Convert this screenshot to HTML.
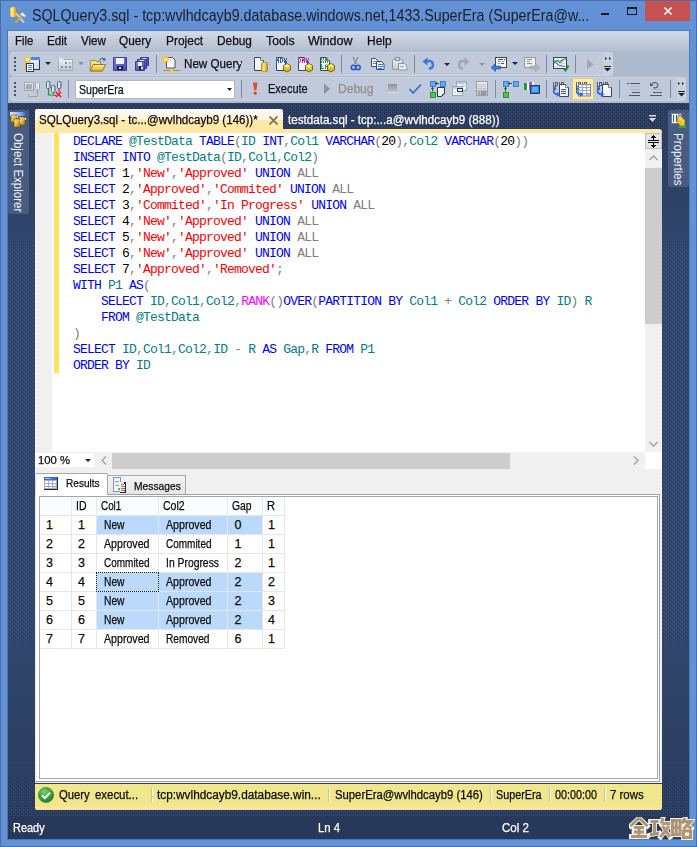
<!DOCTYPE html>
<html><head><meta charset="utf-8"><style>
*{margin:0;padding:0;box-sizing:border-box}
html,body{width:697px;height:847px;overflow:hidden;background:#6592d5}
body{position:relative;font-family:"Liberation Sans",sans-serif;font-size:11px;color:#1e1e1e}
.a{position:absolute;display:block}
.t{position:absolute;white-space:nowrap;line-height:1;transform-origin:0 0;-webkit-text-stroke:0.25px currentColor}
.dots{background-color:#30446a;
 background-image:radial-gradient(circle at 1.5px 1.5px,#243556 0.8px,transparent 1.2px),radial-gradient(circle at 1.5px 1.5px,#243556 0.8px,transparent 1.2px);
 background-size:4px 4px,4px 4px;background-position:0 0,2px 2px}
.code{position:absolute;left:73px;font-family:"Liberation Mono",monospace;font-size:13px;letter-spacing:-0.8px;line-height:16px;white-space:pre;color:#000}
.k{color:#0000ff}.i{color:#008080}.s{color:#ff0000}.g{color:#808080}.m{color:#ff00ff}
</style></head><body>
<div class="a" style="left:0px;top:0px;width:697px;height:847px;background:#6291d6;border:1px solid #4b6da8"></div>
<div class="a" style="left:7px;top:30px;width:683px;height:810px;background:transparent;border:1px solid #4a78b8"></div>
<svg class="a" style="left:6px;top:3px;" width="24" height="24" viewBox="0 0 24 24">
<defs><linearGradient id="cyl" x1="0" x2="1"><stop offset="0" stop-color="#e8b830"/><stop offset="0.35" stop-color="#fff0a0"/><stop offset="0.7" stop-color="#f0b820"/><stop offset="1" stop-color="#c08010"/></linearGradient></defs>
<path d="M12.5 5.3h6.5v4.5M5.5 15.5v4.3h2.5" fill="none" stroke="#40d040" stroke-width="0.9" stroke-dasharray="0.9 1.1"/>
<path d="M4 5.5a3.3 1.5 0 0 1 6.6 0v7a3.3 1.5 0 0 1 -6.6 0z" fill="url(#cyl)"/>
<path d="M10.5 11l7.5 8.5" stroke="#f0f2f6" stroke-width="1.6"/>
<path d="M10.5 11l7.5 8.5" stroke="#9aa0a8" stroke-width="0.5"/>
<circle cx="10.3" cy="11" r="1.4" fill="#f8c020"/>
<path d="M9.5 19.5l6-6" stroke="#e8a818" stroke-width="1.8"/>
<path d="M13.5 11.5l3-2.2 3.5 3.5-1.5 1.5z" fill="#f4f4f6" stroke="#8a9098" stroke-width="0.5"/>
</svg>
<div class="t" style="left:31.50px;top:7.79px;font-size:15.6px;color:#20202c;transform:scaleX(0.9142);-webkit-text-stroke:0">SQLQuery3.sql - tcp:wvlhdcayb9.database.windows.net,1433.SuperEra (SuperEra@w...</div>
<div class="a" style="left:601px;top:13px;width:8px;height:2px;background:#1a1a1a;"></div>
<div class="a" style="left:627px;top:7px;width:10px;height:8px;border:1px solid #1a1a1a;border-top-width:2px"></div>
<div class="a" style="left:645px;top:1px;width:45px;height:20px;background:#c75050;"></div>
<svg class="a" style="left:663px;top:6px;" width="10" height="10" viewBox="0 0 10 10"><path d="M1.5 1.5L8.5 8.5M8.5 1.5L1.5 8.5" stroke="#fff" stroke-width="1.6"/></svg>
<div class="a" style="left:8px;top:30px;width:681px;height:1px;background:#4d79b9;"></div>
<div class="a" style="left:8px;top:31px;width:681px;height:20px;background:linear-gradient(#d5dbe6,#c6cedc 40%,#b3bfd1);"></div>
<div class="a" style="left:8px;top:51px;width:681px;height:52px;background:#aebbcf;"></div>
<div class="t" style="left:14.60px;top:35.27px;font-size:12.2px;color:#10101c;transform:scaleX(0.9360);">File</div>
<div class="t" style="left:46.70px;top:35.27px;font-size:12.2px;color:#10101c;transform:scaleX(0.9561);">Edit</div>
<div class="t" style="left:80.60px;top:35.27px;font-size:12.2px;color:#10101c;transform:scaleX(0.9533);">View</div>
<div class="t" style="left:119.30px;top:35.27px;font-size:12.2px;color:#10101c;transform:scaleX(0.9693);">Query</div>
<div class="t" style="left:165.80px;top:35.27px;font-size:12.2px;color:#10101c;transform:scaleX(0.9798);">Project</div>
<div class="t" style="left:216.60px;top:35.27px;font-size:12.2px;color:#10101c;transform:scaleX(0.9736);">Debug</div>
<div class="t" style="left:266.00px;top:35.27px;font-size:12.2px;color:#10101c;transform:scaleX(1.0077);">Tools</div>
<div class="t" style="left:308.40px;top:35.27px;font-size:12.2px;color:#10101c;transform:scaleX(1.0279);">Window</div>
<div class="t" style="left:366.70px;top:35.27px;font-size:12.2px;color:#10101c;transform:scaleX(0.9844);">Help</div>
<div class="a" style="left:10px;top:52px;width:603px;height:24px;background:#c1cada;border-radius:3px;border:1px solid #ccd4e1"></div>
<div class="a" style="left:603px;top:53px;width:9px;height:22px;background:#c9d1df;border-radius:0 3px 3px 0"></div>
<div class="a" style="left:10px;top:77px;width:676px;height:24px;background:#c1cada;border-radius:3px;border:1px solid #ccd4e1"></div>
<div class="a" style="left:677px;top:78px;width:8px;height:22px;background:#c9d1df;border-radius:0 3px 3px 0"></div>
<div class="a" style="left:14px;top:57px;width:2px;height:2px;background:#445270;"></div>
<div class="a" style="left:14px;top:61px;width:2px;height:2px;background:#445270;"></div>
<div class="a" style="left:14px;top:65px;width:2px;height:2px;background:#445270;"></div>
<div class="a" style="left:14px;top:69px;width:2px;height:2px;background:#445270;"></div>
<div class="a" style="left:14px;top:82px;width:2px;height:2px;background:#445270;"></div>
<div class="a" style="left:14px;top:86px;width:2px;height:2px;background:#445270;"></div>
<div class="a" style="left:14px;top:90px;width:2px;height:2px;background:#445270;"></div>
<div class="a" style="left:14px;top:94px;width:2px;height:2px;background:#445270;"></div>
<div class="a" style="left:75px;top:80px;width:160px;height:19px;background:#fff;border:1px solid #aeb7c6"></div>
<div class="t" style="left:78.50px;top:84.02px;font-size:12.5px;color:#10101c;transform:scaleX(0.8465);">SuperEra</div>
<div class="t" style="left:268.30px;top:83.02px;font-size:12.5px;color:#10101c;transform:scaleX(0.8790);">Execute</div>
<div class="t" style="left:337.50px;top:83.02px;font-size:12.5px;color:#978b86;transform:scaleX(0.9638);">Debug</div>
<div class="t" style="left:183.50px;top:58.02px;font-size:12.5px;color:#10101c;transform:scaleX(0.9293);">New Query</div>
<svg class="a" style="left:0;top:0" width="697" height="102"><defs>
<linearGradient id="winbody" x1="0" y1="0" x2="1" y2="1"><stop offset="0" stop-color="#ffffff"/><stop offset="1" stop-color="#c8d4f0"/></linearGradient>
<linearGradient id="grayg" x1="0" y1="0" x2="0" y2="1"><stop offset="0" stop-color="#eceef2"/><stop offset="1" stop-color="#c4c8ce"/></linearGradient>
<linearGradient id="fold" x1="0" y1="0" x2="0" y2="1"><stop offset="0" stop-color="#fff0a0"/><stop offset="1" stop-color="#e8a820"/></linearGradient>
<linearGradient id="flop" x1="0" y1="0" x2="1" y2="1"><stop offset="0" stop-color="#7a80e0"/><stop offset="1" stop-color="#4a4ab0"/></linearGradient>
<linearGradient id="docg" x1="0" y1="0" x2="1" y2="1"><stop offset="0" stop-color="#ffffff"/><stop offset="1" stop-color="#e4eaf4"/></linearGradient>
<linearGradient id="hexg" x1="0" y1="0" x2="0" y2="1"><stop offset="0" stop-color="#fff060"/><stop offset="1" stop-color="#d0a800"/></linearGradient>
<linearGradient id="cylg" x1="0" y1="0" x2="1" y2="0"><stop offset="0" stop-color="#e0a820"/><stop offset="0.4" stop-color="#ffe890"/><stop offset="1" stop-color="#c88a10"/></linearGradient>
<linearGradient id="playg" x1="0" y1="0" x2="1" y2="0"><stop offset="0" stop-color="#c4c8ce"/><stop offset="1" stop-color="#8c9098"/></linearGradient>
<linearGradient id="stopg" x1="0" y1="0" x2="0" y2="1"><stop offset="0" stop-color="#8e9298"/><stop offset="1" stop-color="#c0c4ca"/></linearGradient>
<linearGradient id="srvg" x1="0" y1="0" x2="1" y2="0"><stop offset="0" stop-color="#ffffff"/><stop offset="1" stop-color="#a8c0e8"/></linearGradient>
</defs><g transform="translate(22,54)">
<rect x="9" y="3" width="9" height="13" fill="#2c3a58"/>
<rect x="9" y="3" width="8" height="12" fill="url(#winbody)"/>
<rect x="9" y="3" width="9" height="3" fill="#4e86e8"/>
<rect x="3" y="9" width="1" height="7" fill="#f0b010"/>
<path d="M5.5 2v7M2 5.5h7M3 3l5 5M8 3l-5 5" stroke="#f6cc20" stroke-width="1.4"/>
<circle cx="5.5" cy="5.5" r="1.5" fill="#fffbe0"/>
<rect x="4" y="9" width="8" height="9" fill="#2c3a58"/>
<rect x="5" y="10" width="6" height="7" fill="#f6f8fc"/>
<rect x="6" y="11" width="4" height="1" fill="#4a80e0"/><rect x="6" y="13" width="4" height="1" fill="#4a80e0"/><rect x="6" y="15" width="4" height="1" fill="#4a80e0"/>
</g><path d="M45 62h6l-3 3z" fill="#1c2434"/><g transform="translate(58,58)">
<rect x="0" y="1" width="15" height="12" fill="#a8adb6"/>
<rect x="1" y="2" width="13" height="10" fill="url(#grayg)"/>
<rect x="7" y="4" width="2" height="2" fill="#8a9098"/><rect x="11" y="4" width="2" height="2" fill="#b8bcc2"/>
<rect x="3" y="8" width="2" height="2" fill="#8a9098"/><rect x="7" y="8" width="2" height="2" fill="#8a9098"/><rect x="11" y="8" width="2" height="2" fill="#8a9098"/>
<path d="M3 -1v5M0.5 1.5h5M1 -0.5l4 4M5 -0.5l-4 4" stroke="#e8eaee" stroke-width="1"/>
</g><path d="M78 62h6l-3 3z" fill="#8a919e"/><g transform="translate(90,57)">
<path d="M0.5 3.5h5l1 1h4v9.5h-10.5z" fill="#f6dc88" stroke="#a88a40"/>
<path d="M3 7.5h12.5l-3 6.5h-12z" fill="url(#fold)" stroke="#a07820"/>
<path d="M9.5 3.5c1-2.5 4-3 5.5-1" fill="none" stroke="#4a7ac8" stroke-width="1.2"/>
<path d="M14 0.5l2 3h-3.5z" fill="#2a5ab0"/>
</g><g transform="translate(113,57)">
<rect x="0" y="0" width="14" height="14" rx="1" fill="#3c3c98"/>
<rect x="1" y="1" width="12" height="12" fill="url(#flop)"/>
<rect x="3" y="1" width="8" height="6" fill="#f0f2fa"/>
<rect x="4" y="9" width="6" height="4" fill="#202048"/>
<rect x="6" y="10" width="2" height="2" fill="#d8dcf0"/>
</g><g transform="translate(140,57)">
<rect x="0" y="0" width="9" height="9" rx="1" fill="#3c3c98"/>
<rect x="1" y="1" width="7" height="7" fill="url(#flop)"/>
<rect x="3" y="1" width="3" height="3" fill="#f0f2fa"/>
<rect x="4" y="4" width="1" height="4" fill="#202048"/>
<rect x="99" y="5" width="2" height="2" fill="#d8dcf0"/>
</g><g transform="translate(137,59)">
<rect x="0" y="0" width="10" height="10" rx="1" fill="#3c3c98"/>
<rect x="1" y="1" width="8" height="8" fill="url(#flop)"/>
<rect x="3" y="1" width="4" height="4" fill="#f0f2fa"/>
<rect x="4" y="5" width="2" height="4" fill="#202048"/>
<rect x="99" y="6" width="2" height="2" fill="#d8dcf0"/>
</g><g transform="translate(135,61)">
<rect x="0" y="0" width="10" height="10" rx="1" fill="#3c3c98"/>
<rect x="1" y="1" width="8" height="8" fill="url(#flop)"/>
<rect x="3" y="1" width="4" height="4" fill="#f0f2fa"/>
<rect x="4" y="5" width="2" height="4" fill="#202048"/>
<rect x="6" y="6" width="2" height="2" fill="#d8dcf0"/>
</g><rect x="156" y="55" width="1" height="18" fill="#7e8a9e"/><g transform="translate(162,56)">
<path d="M4.5 1.5h6l2.5 2.5v8h-8.5z" fill="#f8fafc" stroke="#4a5068"/>
<path d="M3.5 0v7M0 3.5h7M1 1l5 5M6 1l-5 5" stroke="#f8b820" stroke-width="1.5"/>
<circle cx="3.5" cy="3.5" r="2" fill="#ffe860"/>
<rect x="9" y="12" width="1" height="2" fill="#7a8090"/>
<rect x="1" y="14" width="17" height="1" fill="#c88a10"/>
<rect x="8" y="13" width="3" height="3" fill="#f8d020"/>
</g><path d="M254.5 57.5h6l3 3v10h-9z" fill="url(#docg)" stroke="#3c4662"/><path d="M260.5 57.5v3h3" fill="#fff" stroke="#3c4662" stroke-width="0.7"/><path d="M261.5 63.5a3 1.2 0 0 1 6 0v7a3 1.2 0 0 1 -6 0z" fill="url(#cylg)" stroke="#b07810" stroke-width="0.7"/><path d="M276.5 57.5h6l3 3v10h-9z" fill="url(#docg)" stroke="#3c4662"/><path d="M282.5 57.5v3h3" fill="#fff" stroke="#3c4662" stroke-width="0.7"/><g shape-rendering="crispEdges"><rect x="276" y="58" width="1" height="1" fill="#2a62c0"/><rect x="278" y="58" width="1" height="1" fill="#2a62c0"/><rect x="276" y="59" width="1" height="1" fill="#2a62c0"/><rect x="277" y="59" width="1" height="1" fill="#2a62c0"/><rect x="278" y="59" width="1" height="1" fill="#2a62c0"/><rect x="276" y="60" width="1" height="1" fill="#2a62c0"/><rect x="277" y="60" width="1" height="1" fill="#2a62c0"/><rect x="278" y="60" width="1" height="1" fill="#2a62c0"/><rect x="276" y="61" width="1" height="1" fill="#2a62c0"/><rect x="278" y="61" width="1" height="1" fill="#2a62c0"/><rect x="276" y="62" width="1" height="1" fill="#2a62c0"/><rect x="278" y="62" width="1" height="1" fill="#2a62c0"/><rect x="280" y="58" width="1" height="1" fill="#2a62c0"/><rect x="281" y="58" width="1" height="1" fill="#2a62c0"/><rect x="280" y="59" width="1" height="1" fill="#2a62c0"/><rect x="282" y="59" width="1" height="1" fill="#2a62c0"/><rect x="280" y="60" width="1" height="1" fill="#2a62c0"/><rect x="282" y="60" width="1" height="1" fill="#2a62c0"/><rect x="280" y="61" width="1" height="1" fill="#2a62c0"/><rect x="282" y="61" width="1" height="1" fill="#2a62c0"/><rect x="280" y="62" width="1" height="1" fill="#2a62c0"/><rect x="281" y="62" width="1" height="1" fill="#2a62c0"/><rect x="284" y="58" width="1" height="1" fill="#2a62c0"/><rect x="286" y="58" width="1" height="1" fill="#2a62c0"/><rect x="284" y="59" width="1" height="1" fill="#2a62c0"/><rect x="286" y="59" width="1" height="1" fill="#2a62c0"/><rect x="285" y="60" width="1" height="1" fill="#2a62c0"/><rect x="284" y="61" width="1" height="1" fill="#2a62c0"/><rect x="286" y="61" width="1" height="1" fill="#2a62c0"/><rect x="284" y="62" width="1" height="1" fill="#2a62c0"/><rect x="286" y="62" width="1" height="1" fill="#2a62c0"/></g><path d="M283.5 65.5L287 63.5L290.5 65.5v4.5L287 72L283.5 70z" fill="url(#hexg)" stroke="#706010" stroke-width="0.9"/><path d="M284.5 65.8L287 64.5L289.5 65.8L287 67z" fill="#fffac0"/><path d="M298.5 57.5h6l3 3v10h-9z" fill="url(#docg)" stroke="#3c4662"/><path d="M304.5 57.5v3h3" fill="#fff" stroke="#3c4662" stroke-width="0.7"/><g shape-rendering="crispEdges"><rect x="298" y="58" width="1" height="1" fill="#c028b8"/><rect x="299" y="58" width="1" height="1" fill="#c028b8"/><rect x="298" y="59" width="1" height="1" fill="#c028b8"/><rect x="300" y="59" width="1" height="1" fill="#c028b8"/><rect x="298" y="60" width="1" height="1" fill="#c028b8"/><rect x="300" y="60" width="1" height="1" fill="#c028b8"/><rect x="298" y="61" width="1" height="1" fill="#c028b8"/><rect x="300" y="61" width="1" height="1" fill="#c028b8"/><rect x="298" y="62" width="1" height="1" fill="#c028b8"/><rect x="299" y="62" width="1" height="1" fill="#c028b8"/><rect x="302" y="58" width="1" height="1" fill="#c028b8"/><rect x="304" y="58" width="1" height="1" fill="#c028b8"/><rect x="302" y="59" width="1" height="1" fill="#c028b8"/><rect x="303" y="59" width="1" height="1" fill="#c028b8"/><rect x="304" y="59" width="1" height="1" fill="#c028b8"/><rect x="302" y="60" width="1" height="1" fill="#c028b8"/><rect x="303" y="60" width="1" height="1" fill="#c028b8"/><rect x="304" y="60" width="1" height="1" fill="#c028b8"/><rect x="302" y="61" width="1" height="1" fill="#c028b8"/><rect x="304" y="61" width="1" height="1" fill="#c028b8"/><rect x="302" y="62" width="1" height="1" fill="#c028b8"/><rect x="304" y="62" width="1" height="1" fill="#c028b8"/><rect x="306" y="58" width="1" height="1" fill="#c028b8"/><rect x="308" y="58" width="1" height="1" fill="#c028b8"/><rect x="306" y="59" width="1" height="1" fill="#c028b8"/><rect x="308" y="59" width="1" height="1" fill="#c028b8"/><rect x="307" y="60" width="1" height="1" fill="#c028b8"/><rect x="306" y="61" width="1" height="1" fill="#c028b8"/><rect x="308" y="61" width="1" height="1" fill="#c028b8"/><rect x="306" y="62" width="1" height="1" fill="#c028b8"/><rect x="308" y="62" width="1" height="1" fill="#c028b8"/></g><path d="M305.5 65.5L309 63.5L312.5 65.5v4.5L309 72L305.5 70z" fill="url(#hexg)" stroke="#706010" stroke-width="0.9"/><path d="M306.5 65.8L309 64.5L311.5 65.8L309 67z" fill="#fffac0"/><path d="M320.5 57.5h6l3 3v10h-9z" fill="url(#docg)" stroke="#3c4662"/><path d="M326.5 57.5v3h3" fill="#fff" stroke="#3c4662" stroke-width="0.7"/><g shape-rendering="crispEdges"><rect x="321" y="58" width="1" height="1" fill="#30a050"/><rect x="323" y="58" width="1" height="1" fill="#30a050"/><rect x="321" y="59" width="1" height="1" fill="#30a050"/><rect x="323" y="59" width="1" height="1" fill="#30a050"/><rect x="322" y="60" width="1" height="1" fill="#30a050"/><rect x="321" y="61" width="1" height="1" fill="#30a050"/><rect x="323" y="61" width="1" height="1" fill="#30a050"/><rect x="321" y="62" width="1" height="1" fill="#30a050"/><rect x="323" y="62" width="1" height="1" fill="#30a050"/><rect x="325" y="58" width="1" height="1" fill="#30a050"/><rect x="327" y="58" width="1" height="1" fill="#30a050"/><rect x="325" y="59" width="1" height="1" fill="#30a050"/><rect x="326" y="59" width="1" height="1" fill="#30a050"/><rect x="327" y="59" width="1" height="1" fill="#30a050"/><rect x="325" y="60" width="1" height="1" fill="#30a050"/><rect x="326" y="60" width="1" height="1" fill="#30a050"/><rect x="327" y="60" width="1" height="1" fill="#30a050"/><rect x="325" y="61" width="1" height="1" fill="#30a050"/><rect x="327" y="61" width="1" height="1" fill="#30a050"/><rect x="325" y="62" width="1" height="1" fill="#30a050"/><rect x="327" y="62" width="1" height="1" fill="#30a050"/></g><g shape-rendering="crispEdges"><rect x="321" y="64" width="1" height="1" fill="#30a050"/><rect x="321" y="65" width="1" height="1" fill="#30a050"/><rect x="321" y="66" width="1" height="1" fill="#30a050"/><rect x="321" y="67" width="1" height="1" fill="#30a050"/><rect x="321" y="68" width="1" height="1" fill="#30a050"/><rect x="322" y="68" width="1" height="1" fill="#30a050"/><rect x="323" y="68" width="1" height="1" fill="#30a050"/><rect x="326" y="64" width="1" height="1" fill="#30a050"/><rect x="325" y="65" width="1" height="1" fill="#30a050"/><rect x="327" y="65" width="1" height="1" fill="#30a050"/><rect x="325" y="66" width="1" height="1" fill="#30a050"/><rect x="326" y="66" width="1" height="1" fill="#30a050"/><rect x="327" y="66" width="1" height="1" fill="#30a050"/><rect x="325" y="67" width="1" height="1" fill="#30a050"/><rect x="327" y="67" width="1" height="1" fill="#30a050"/><rect x="325" y="68" width="1" height="1" fill="#30a050"/><rect x="327" y="68" width="1" height="1" fill="#30a050"/></g><path d="M327.5 65.5L331 63.5L334.5 65.5v4.5L331 72L327.5 70z" fill="url(#hexg)" stroke="#706010" stroke-width="0.9"/><path d="M328.5 65.8L331 64.5L333.5 65.8L331 67z" fill="#fffac0"/><rect x="341" y="55" width="1" height="18" fill="#7e8a9e"/><path d="M353 57l3.5 7M358 57l-3.5 7" stroke="#8a8e96" stroke-width="1.4"/>
<circle cx="353.5" cy="67.5" r="2.2" fill="none" stroke="#2a58c8" stroke-width="1.6"/>
<circle cx="358" cy="67.5" r="2.2" fill="none" stroke="#2a58c8" stroke-width="1.6"/><path d="M371.5 58.5h4l2 2v6h-6z" fill="#fafcff" stroke="#3a5080"/>
<rect x="373" y="61" width="3" height="1" fill="#4a80e0"/><rect x="373" y="63" width="3" height="1" fill="#4a80e0"/>
<path d="M376.5 61.5h5l2.5 2.5v5.5h-7.5z" fill="#fafcff" stroke="#2a4a90"/>
<rect x="378" y="64" width="5" height="1" fill="#3a70d8"/><rect x="378" y="66" width="5" height="1" fill="#3a70d8"/><rect x="378" y="68" width="4" height="1" fill="#3a70d8"/><rect x="392.5" y="59.5" width="10" height="10" rx="1" fill="url(#grayg)" stroke="#8e9298"/>
<rect x="395.5" y="57.5" width="4" height="3" fill="#d0d2d6" stroke="#8e9298"/>
<path d="M398.5 63.5h6l2.5 2.5v4h-8.5z" fill="#e8eaee" stroke="#8e9298"/>
<rect x="400" y="66" width="4" height="1" fill="#a0a4aa"/><rect x="414" y="55" width="1" height="18" fill="#7e8a9e"/><path d="M426 61h3.5a3.8 3.8 0 0 1 0.5 7.5l-0.8 0.8" fill="none" stroke="#3a7ae0" stroke-width="2.4"/><path d="M422.5 61.5l5-4.2v8.4z" fill="#3a7ae0"/><path d="M444 63h6l-3 3z" fill="#1c2434"/><path d="M466 61h-3.5a3.8 3.8 0 0 0 -0.5 7.5l0.8 0.8" fill="none" stroke="#a4a8ae" stroke-width="2.4"/><path d="M469.5 61.5l-5-4.2v8.4z" fill="#a4a8ae"/><path d="M479 63h6l-3 3z" fill="#8a919e"/><rect x="495.5" y="57.5" width="11" height="10" fill="#fcfcfc" stroke="#4a4430"/>
<rect x="498" y="59" width="5" height="1" fill="#1a50e8"/><rect x="504" y="59" width="1" height="1" fill="#1a50e8"/>
<rect x="498" y="61" width="3" height="1" fill="#909090"/><rect x="502" y="61" width="2" height="1" fill="#909090"/>
<rect x="498" y="63" width="2" height="1" fill="#909090"/><rect x="501" y="63" width="3" height="1" fill="#1a50e8"/>
<path d="M491 67.5l4.5-4v2.5h5v3h-5v2.5z" fill="#3a7ae0" stroke="#1a4aa8" stroke-width="0.6"/><path d="M512 62h6l-3 3z" fill="#1c2434"/><rect x="524.5" y="57.5" width="11" height="10" fill="#eeeeee" stroke="#9a9a9a"/>
<rect x="527" y="59" width="5" height="1" fill="#909090"/><rect x="527" y="61" width="3" height="1" fill="#b0b0b0"/><rect x="527" y="63" width="5" height="1" fill="#909090"/>
<path d="M540 67.5l-4.5-4v2.5h-5v3h5v2.5z" fill="#b4b6ba" stroke="#9a9ca0" stroke-width="0.6"/><rect x="546" y="55" width="1" height="18" fill="#7e8a9e"/><rect x="553.5" y="57.5" width="13" height="11" fill="#f4f6fa" stroke="#3a4660"/>
<path d="M554 60.5h12M554 63.5h12M554 66.5h12M557.5 58v10M561.5 58v10" stroke="#c8d0e0" stroke-width="0.8"/>
<path d="M554 63l3-2.5 3 2 3-3 3.5-1" fill="none" stroke="#2a9a30" stroke-width="1.2"/>
<path d="M554 60l3 4 3 1.5 5 1" fill="none" stroke="#3a70e0" stroke-width="1"/>
<path d="M564 69l1.5 1.5 3-5" fill="none" stroke="#2a8a20" stroke-width="2"/><rect x="575" y="55" width="1" height="18" fill="#7e8a9e"/><path d="M587 59l6.5 5.2L587 69.5z" fill="#a2a6ad"/><path d="M605 57l2 1.5-2 1.5zM609 57l2 1.5-2 1.5z" fill="#1c2434"/><rect x="604" y="66" width="7" height="1" fill="#1c2434"/><path d="M604 68h7l-3.5 3.5z" fill="#1c2434"/><g>
<rect x="24.5" y="82.5" width="9" height="8" fill="url(#grayg)" stroke="#a4a8ae"/>
<rect x="26" y="84" width="6" height="5" fill="#a8acb2"/>
<rect x="24" y="91" width="10" height="3" fill="#c8ccd2"/>
<rect x="35.5" y="82.5" width="4" height="7" rx="1" fill="#e4e6ea" stroke="#a4a8ae"/>
<path d="M28.5 94v2.5h9v-6" fill="none" stroke="#a0a4aa"/>
<path d="M35.5 92l2-2 2 2z" fill="#a0a4aa"/>
</g><g>
<rect x="46.5" y="81.5" width="3.5" height="7" rx="1.2" fill="url(#srvg)" stroke="#3c4660" stroke-width="0.8"/>
<rect x="51.5" y="85.5" width="3.5" height="7" rx="1.2" fill="url(#srvg)" stroke="#3c4660" stroke-width="0.8"/>
<rect x="57.5" y="81.5" width="3.5" height="7" rx="1.2" fill="url(#srvg)" stroke="#3c4660" stroke-width="0.8"/>
<path d="M48.5 89v6h5v-2" fill="none" stroke="#1a9a1a" stroke-width="1.2"/>
<path d="M59 89v3" stroke="#f01818" stroke-width="1.2"/>
<path d="M56 92l5 5M61 92l-5 5" stroke="#f81818" stroke-width="1.6"/>
<path d="M54 95.5h2" stroke="#f01818" stroke-width="1.2"/>
</g><rect x="68" y="80" width="1" height="18" fill="#7e8a9e"/><rect x="241" y="80" width="1" height="18" fill="#7e8a9e"/><path d="M253 82.5h4.5l-1.2 8h-2.1z" fill="#e84a30"/><circle cx="255.2" cy="93.2" r="1.5" fill="#d83a20"/><path d="M324 83.5l6 5.3-6 5.4z" fill="#8e9299"/><rect x="388" y="84" width="9" height="8" fill="url(#stopg)"/><rect x="388" y="92" width="9" height="1" fill="#dde2ea"/><path d="M409.5 89l3.5 4L421 84.5" fill="none" stroke="#3a68d0" stroke-width="1.7"/><rect x="430.5" y="81.5" width="5" height="5" fill="#5aaef8" stroke="#2a70c0" stroke-width="0.8"/><rect x="440.5" y="81.5" width="5" height="5" fill="#5aaef8" stroke="#2a70c0" stroke-width="0.8"/><rect x="430.5" y="92.5" width="5" height="5" fill="#40d040" stroke="#208020" stroke-width="0.8"/><path d="M436 83.5h3M432.5 87v4.5" stroke="#303848" stroke-width="0.9"/><path d="M437 82l-1.5 1.5 1.5 1.5M431 89l1.5-1.5 1.5 1.5" fill="none" stroke="#303848" stroke-width="0.7"/><path d="M437.5 87.5h7v6l-3 3h-4z" fill="url(#docg)" stroke="#303848"/><path d="M441.5 96.5l2-3" stroke="#303848"/><rect x="456.5" y="81.5" width="10" height="9" fill="#f2f5fa" stroke="#9aa6ba"/><rect x="457" y="82" width="9" height="2" fill="#b8d0f0"/>
<rect x="452.5" y="86.5" width="10" height="9" fill="#f6f8fb" stroke="#9aa6ba"/><rect x="453" y="87" width="9" height="2" fill="#b8d0f0"/>
<rect x="457.5" y="88.5" width="5" height="3" fill="#e8ecf2" stroke="#2a3450"/>
<path d="M454 92.5h2M457 93.5h4M459 83.5h5M462 85.5h3" stroke="#a8b4c8" stroke-width="0.8"/><rect x="476.5" y="81.5" width="11" height="14" fill="url(#grayg)" stroke="#9a9ea6"/>
<path d="M478 84.5h8M478 86.5h8M478 88.5h8" stroke="#b8bcc2" stroke-width="0.8"/>
<rect x="477" y="90" width="10" height="5" fill="#b8bcc2"/>
<path d="M479 92h1M481 92h5M479 94h1M481 94h5" stroke="#6a7078" stroke-width="0.9"/><rect x="495" y="80" width="1" height="18" fill="#7e8a9e"/><rect x="503.5" y="81.5" width="5" height="5" fill="#5aaef8" stroke="#2a70c0" stroke-width="0.8"/><rect x="513.5" y="81.5" width="5" height="5" fill="#5aaef8" stroke="#2a70c0" stroke-width="0.8"/><rect x="503.5" y="92.5" width="5" height="5" fill="#40d040" stroke="#208020" stroke-width="0.8"/><path d="M509 83.5h3M505.5 87v4.5" stroke="#303848" stroke-width="0.9"/><path d="M510 82l-1.5 1.5 1.5 1.5M504 89l1.5-1.5 1.5 1.5" fill="none" stroke="#303848" stroke-width="0.7"/><rect x="524" y="83" width="3" height="7" fill="#2a9a30"/><rect x="527" y="82" width="2" height="8" fill="#f4f4f4"/>
<rect x="529" y="82" width="3" height="8" fill="#8a68c8"/><rect x="532" y="82" width="2" height="8" fill="#f4f4f4"/>
<rect x="530.5" y="85.5" width="9" height="8" fill="#2a7ae8" stroke="#2a3a60"/><rect x="532" y="87" width="6" height="5" fill="#5aa8f8"/>
<rect x="531" y="94" width="8" height="2" fill="#c8ccd4"/><rect x="546" y="80" width="1" height="18" fill="#7e8a9e"/><g shape-rendering="crispEdges"><rect x="553" y="82" width="1" height="1" fill="#5a6070"/><rect x="553" y="83" width="1" height="1" fill="#5a6070"/><rect x="553" y="84" width="1" height="1" fill="#5a6070"/><rect x="553" y="85" width="1" height="1" fill="#5a6070"/><rect x="555" y="82" width="1" height="1" fill="#5a6070"/><rect x="556" y="82" width="1" height="1" fill="#5a6070"/><rect x="557" y="82" width="1" height="1" fill="#5a6070"/><rect x="555" y="83" width="1" height="1" fill="#5a6070"/><rect x="557" y="83" width="1" height="1" fill="#5a6070"/><rect x="555" y="84" width="1" height="1" fill="#5a6070"/><rect x="557" y="84" width="1" height="1" fill="#5a6070"/><rect x="555" y="85" width="1" height="1" fill="#5a6070"/><rect x="556" y="85" width="1" height="1" fill="#5a6070"/><rect x="557" y="85" width="1" height="1" fill="#5a6070"/><rect x="559" y="82" width="1" height="1" fill="#5a6070"/><rect x="559" y="83" width="1" height="1" fill="#5a6070"/><rect x="559" y="84" width="1" height="1" fill="#5a6070"/><rect x="559" y="85" width="1" height="1" fill="#5a6070"/><rect x="561" y="82" width="1" height="1" fill="#5a6070"/><rect x="562" y="82" width="1" height="1" fill="#5a6070"/><rect x="563" y="82" width="1" height="1" fill="#5a6070"/><rect x="561" y="83" width="1" height="1" fill="#5a6070"/><rect x="563" y="83" width="1" height="1" fill="#5a6070"/><rect x="561" y="84" width="1" height="1" fill="#5a6070"/><rect x="563" y="84" width="1" height="1" fill="#5a6070"/><rect x="561" y="85" width="1" height="1" fill="#5a6070"/><rect x="562" y="85" width="1" height="1" fill="#5a6070"/><rect x="563" y="85" width="1" height="1" fill="#5a6070"/></g><g shape-rendering="crispEdges"><rect x="553" y="86" width="1" height="1" fill="#5a6070"/><rect x="554" y="86" width="1" height="1" fill="#5a6070"/><rect x="555" y="86" width="1" height="1" fill="#5a6070"/><rect x="553" y="87" width="1" height="1" fill="#5a6070"/><rect x="555" y="87" width="1" height="1" fill="#5a6070"/><rect x="553" y="88" width="1" height="1" fill="#5a6070"/><rect x="555" y="88" width="1" height="1" fill="#5a6070"/><rect x="553" y="89" width="1" height="1" fill="#5a6070"/><rect x="554" y="89" width="1" height="1" fill="#5a6070"/><rect x="555" y="89" width="1" height="1" fill="#5a6070"/></g><path d="M559.5 84.5h6l3 3v9h-9z" fill="url(#docg)" stroke="#3c4662"/><path d="M565.5 84.5v3h3" fill="#fff" stroke="#3c4662" stroke-width="0.7"/><g shape-rendering="crispEdges" fill="#505870"><rect x="561" y="89" width="5" height="1"/><rect x="561" y="91" width="5" height="1"/><rect x="561" y="93" width="5" height="1"/></g><path d="M555 88c-2.5 2-2 6 2.5 6.5" fill="none" stroke="#2a68e0" stroke-width="1.7"/><path d="M557 92l3.5 2.5-3.5 2.5z" fill="#2a68e0"/><rect x="572.5" y="78.5" width="21" height="21" fill="#fdeab0" stroke="#ecc870"/><g shape-rendering="crispEdges"><rect x="576" y="82" width="1" height="1" fill="#5a6070"/><rect x="576" y="83" width="1" height="1" fill="#5a6070"/><rect x="576" y="84" width="1" height="1" fill="#5a6070"/><rect x="576" y="85" width="1" height="1" fill="#5a6070"/><rect x="578" y="82" width="1" height="1" fill="#5a6070"/><rect x="579" y="82" width="1" height="1" fill="#5a6070"/><rect x="580" y="82" width="1" height="1" fill="#5a6070"/><rect x="578" y="83" width="1" height="1" fill="#5a6070"/><rect x="580" y="83" width="1" height="1" fill="#5a6070"/><rect x="578" y="84" width="1" height="1" fill="#5a6070"/><rect x="580" y="84" width="1" height="1" fill="#5a6070"/><rect x="578" y="85" width="1" height="1" fill="#5a6070"/><rect x="579" y="85" width="1" height="1" fill="#5a6070"/><rect x="580" y="85" width="1" height="1" fill="#5a6070"/><rect x="582" y="82" width="1" height="1" fill="#5a6070"/><rect x="582" y="83" width="1" height="1" fill="#5a6070"/><rect x="582" y="84" width="1" height="1" fill="#5a6070"/><rect x="582" y="85" width="1" height="1" fill="#5a6070"/><rect x="584" y="82" width="1" height="1" fill="#5a6070"/><rect x="585" y="82" width="1" height="1" fill="#5a6070"/><rect x="586" y="82" width="1" height="1" fill="#5a6070"/><rect x="584" y="83" width="1" height="1" fill="#5a6070"/><rect x="586" y="83" width="1" height="1" fill="#5a6070"/><rect x="584" y="84" width="1" height="1" fill="#5a6070"/><rect x="586" y="84" width="1" height="1" fill="#5a6070"/><rect x="584" y="85" width="1" height="1" fill="#5a6070"/><rect x="585" y="85" width="1" height="1" fill="#5a6070"/><rect x="586" y="85" width="1" height="1" fill="#5a6070"/></g><g shape-rendering="crispEdges"><rect x="576" y="86" width="1" height="1" fill="#5a6070"/><rect x="577" y="86" width="1" height="1" fill="#5a6070"/><rect x="578" y="86" width="1" height="1" fill="#5a6070"/><rect x="576" y="87" width="1" height="1" fill="#5a6070"/><rect x="578" y="87" width="1" height="1" fill="#5a6070"/><rect x="576" y="88" width="1" height="1" fill="#5a6070"/><rect x="578" y="88" width="1" height="1" fill="#5a6070"/><rect x="576" y="89" width="1" height="1" fill="#5a6070"/><rect x="577" y="89" width="1" height="1" fill="#5a6070"/><rect x="578" y="89" width="1" height="1" fill="#5a6070"/></g><rect x="578.5" y="84.5" width="12" height="11.5" fill="#f8fafd" stroke="#7a88a0"/><path d="M578.5 87.5h12M578.5 90.5h12M578.5 93.5h12M582.5 84.5v11.5M586.5 84.5v11.5" stroke="#8898b0" stroke-width="0.8"/><rect x="587" y="94" width="3" height="2" fill="#9cc0ec"/><path d="M578 88c-2.5 2-2 6 2.5 6.5" fill="none" stroke="#2a68e0" stroke-width="1.7"/><path d="M580 92l3.5 2.5-3.5 2.5z" fill="#2a68e0"/><g shape-rendering="crispEdges"><rect x="597" y="82" width="1" height="1" fill="#5a6070"/><rect x="597" y="83" width="1" height="1" fill="#5a6070"/><rect x="597" y="84" width="1" height="1" fill="#5a6070"/><rect x="597" y="85" width="1" height="1" fill="#5a6070"/><rect x="599" y="82" width="1" height="1" fill="#5a6070"/><rect x="600" y="82" width="1" height="1" fill="#5a6070"/><rect x="601" y="82" width="1" height="1" fill="#5a6070"/><rect x="599" y="83" width="1" height="1" fill="#5a6070"/><rect x="601" y="83" width="1" height="1" fill="#5a6070"/><rect x="599" y="84" width="1" height="1" fill="#5a6070"/><rect x="601" y="84" width="1" height="1" fill="#5a6070"/><rect x="599" y="85" width="1" height="1" fill="#5a6070"/><rect x="600" y="85" width="1" height="1" fill="#5a6070"/><rect x="601" y="85" width="1" height="1" fill="#5a6070"/><rect x="603" y="82" width="1" height="1" fill="#5a6070"/><rect x="603" y="83" width="1" height="1" fill="#5a6070"/><rect x="603" y="84" width="1" height="1" fill="#5a6070"/><rect x="603" y="85" width="1" height="1" fill="#5a6070"/><rect x="605" y="82" width="1" height="1" fill="#5a6070"/><rect x="606" y="82" width="1" height="1" fill="#5a6070"/><rect x="607" y="82" width="1" height="1" fill="#5a6070"/><rect x="605" y="83" width="1" height="1" fill="#5a6070"/><rect x="607" y="83" width="1" height="1" fill="#5a6070"/><rect x="605" y="84" width="1" height="1" fill="#5a6070"/><rect x="607" y="84" width="1" height="1" fill="#5a6070"/><rect x="605" y="85" width="1" height="1" fill="#5a6070"/><rect x="606" y="85" width="1" height="1" fill="#5a6070"/><rect x="607" y="85" width="1" height="1" fill="#5a6070"/></g><g shape-rendering="crispEdges"><rect x="597" y="86" width="1" height="1" fill="#5a6070"/><rect x="598" y="86" width="1" height="1" fill="#5a6070"/><rect x="599" y="86" width="1" height="1" fill="#5a6070"/><rect x="597" y="87" width="1" height="1" fill="#5a6070"/><rect x="599" y="87" width="1" height="1" fill="#5a6070"/><rect x="597" y="88" width="1" height="1" fill="#5a6070"/><rect x="599" y="88" width="1" height="1" fill="#5a6070"/><rect x="597" y="89" width="1" height="1" fill="#5a6070"/><rect x="598" y="89" width="1" height="1" fill="#5a6070"/><rect x="599" y="89" width="1" height="1" fill="#5a6070"/></g><path d="M602.5 84.5h6l3 3v9h-9z" fill="url(#docg)" stroke="#3c4662"/><path d="M608.5 84.5v3h3" fill="#fff" stroke="#3c4662" stroke-width="0.7"/><path d="M599 88c-2.5 2-2 6 2.5 6.5" fill="none" stroke="#2a68e0" stroke-width="1.7"/><path d="M601 92l3.5 2.5-3.5 2.5z" fill="#2a68e0"/><rect x="619" y="80" width="1" height="18" fill="#7e8a9e"/><rect x="627" y="83" width="2" height="1" fill="#50586a"/><rect x="630" y="83" width="10" height="1" fill="#50586a"/>
<rect x="630" y="86" width="10" height="1" fill="#b0b6c0"/><rect x="630" y="89" width="10" height="1" fill="#b0b6c0"/>
<rect x="632" y="92" width="8" height="1" fill="#50586a"/><rect x="629" y="95" width="11" height="1" fill="#50586a"/><path d="M652 84.5a3 2.6 0 1 1 1.5 3" fill="none" stroke="#50586a" stroke-width="1.1"/><path d="M650 82.5v3.5h3.5z" fill="#50586a"/>
<rect x="652" y="89" width="10" height="1" fill="#b0b6c0"/>
<rect x="653" y="92" width="9" height="1" fill="#50586a"/><rect x="650" y="95" width="12" height="1" fill="#50586a"/><rect x="670" y="80" width="1" height="18" fill="#7e8a9e"/><path d="M678 82l2 1.5-2 1.5zM682 82l2 1.5-2 1.5z" fill="#1c2434"/><rect x="678" y="91" width="7" height="1" fill="#1c2434"/><path d="M678 93h7l-3.5 3.5z" fill="#1c2434"/><path d="M227 88h5l-2.5 3z" fill="#1c2434"/></svg>
<svg class="a" style="left:8px;top:103px" width="681" height="713" shape-rendering="crispEdges"><defs><pattern id="dp" width="4" height="4" patternUnits="userSpaceOnUse"><rect width="4" height="4" fill="#33496f"/><rect x="1" y="0" width="1" height="1" fill="#26385c"/><rect x="3" y="2" width="1" height="1" fill="#26385c"/></pattern><pattern id="dq" width="4" height="4" patternUnits="userSpaceOnUse"><rect width="4" height="4" fill="#293a5c"/><rect x="1" y="0" width="1" height="1" fill="#3a5078"/><rect x="3" y="2" width="1" height="1" fill="#3a5078"/></pattern><linearGradient id="mg" gradientUnits="userSpaceOnUse" x1="0" y1="0" x2="0" y2="713"><stop offset="0" stop-color="#fff"/><stop offset="0.04" stop-color="#fff"/><stop offset="0.2" stop-color="#000"/><stop offset="0.75" stop-color="#000"/><stop offset="1" stop-color="#fff"/></linearGradient><mask id="mk" maskUnits="userSpaceOnUse" x="0" y="0" width="681" height="713"><rect width="681" height="713" fill="url(#mg)" shape-rendering="auto"/></mask></defs><rect width="681" height="713" fill="url(#dp)"/><rect width="681" height="713" fill="url(#dq)" mask="url(#mk)"/></svg>
<div class="a" style="left:8px;top:816px;width:681px;height:23px;background:#28385a;"></div>
<div class="a" style="left:8px;top:110px;width:21px;height:104px;background:#485b80;border-radius:2px"></div>
<svg class="a" style="left:10px;top:111px;" width="17" height="17" viewBox="0 0 17 17">
<defs><linearGradient id="oeb" x1="0" x2="1"><stop offset="0" stop-color="#d8e8ff"/><stop offset="0.7" stop-color="#7aa8f0"/><stop offset="1" stop-color="#2a5ad0"/></linearGradient>
<linearGradient id="oey" x1="0" y1="0" x2="1" y2="1"><stop offset="0" stop-color="#fff0a0"/><stop offset="0.5" stop-color="#e8b830"/><stop offset="1" stop-color="#b07810"/></linearGradient></defs>
<rect x="0" y="1" width="16" height="4" fill="url(#oeb)"/>
<rect x="1" y="4" width="6" height="7" fill="url(#oey)" stroke="#5a4a20" stroke-width="0.5"/>
<rect x="9" y="6" width="6" height="8" fill="url(#oey)" stroke="#5a4a20" stroke-width="0.5"/>
<rect x="4" y="8" width="6" height="8" fill="url(#oey)" stroke="#5a4a20" stroke-width="0.5"/>
<rect x="7" y="5" width="1" height="2" fill="#fff8d0"/><rect x="15" y="7" width="1" height="2" fill="#fff8d0"/><rect x="10" y="9" width="1" height="2" fill="#fff8d0"/>
</svg>
<div class="t" style="left:24px;top:133px;font-size:12.5px;color:#eef1f6;transform:rotate(90deg) scaleX(0.92);transform-origin:0 0;-webkit-text-stroke:0">Object Explorer</div>
<div class="a" style="left:668px;top:110px;width:21px;height:77px;background:#485b80;border-radius:2px"></div>
<svg class="a" style="left:670px;top:112px;" width="17" height="16" viewBox="0 0 17 16">
<rect x="1.5" y="1.5" width="10" height="10" fill="#f4f7fc" stroke="#6a80a8"/>
<rect x="3" y="3" width="1" height="7" fill="#3a5a90"/><rect x="6" y="3" width="1" height="7" fill="#3a5a90"/>
<rect x="8" y="2" width="3" height="3" fill="#9ac0f0"/>
<path d="M8 4l2-1 5 5.5v5.5h-5l-3-5z" fill="#f0c030" stroke="#8a6a10" stroke-width="0.6"/>
<path d="M9 6l4 4M10 5l4 4" stroke="#fff0a0" stroke-width="0.7"/>
<rect x="9" y="14" width="7" height="2" fill="#38a038"/>
</svg>
<div class="t" style="left:684px;top:133px;font-size:12.5px;color:#eef1f6;transform:rotate(90deg) scaleX(0.92);transform-origin:0 0;-webkit-text-stroke:0">Properties</div>
<div class="a" style="left:35px;top:109px;width:248px;height:24px;background:linear-gradient(#fffcf4 0,#fff4dc 46%,#fee9aa 46%,#fee8a6 100%);border-radius:2px 2px 0 0"></div>
<div class="t" style="left:39.30px;top:114.02px;font-size:12.5px;color:#0c0c0c;transform:scaleX(0.9252);">SQLQuery3.sql - tc...@wvlhdcayb9 (146))*</div>
<svg class="a" style="left:268px;top:115px;" width="11" height="11" viewBox="0 0 11 11"><path d="M1.5 1.5l8 8M9.5 1.5l-8 8" stroke="#6a6654" stroke-width="1.7"/></svg>
<div class="t" style="left:288.00px;top:114.02px;font-size:12.5px;color:#ffffff;transform:scaleX(0.9302);">testdata.sql - tcp:...a@wvlhdcayb9 (888))</div>
<svg class="a" style="left:649px;top:115px;" width="7" height="8" viewBox="0 0 7 8"><rect x="0" y="0" width="7" height="1.5" fill="#d8dde8"/><path d="M0 3h7l-3.5 4z" fill="#d8dde8"/></svg>
<div class="a" style="left:35px;top:129px;width:627px;height:4px;background:#fee8a6;border-radius:0 3px 0 0"></div>
<div class="a" style="left:35px;top:133px;width:627px;height:336px;background:#ffffff;"></div>
<div class="a" style="left:35px;top:133px;width:17px;height:319px;background:#f0f0f0;"></div>
<div class="a" style="left:54px;top:133px;width:5px;height:240px;background:#ffe35c;"></div>
<div class="code" style="top:134px"><span class="k">DECLARE</span> <span class="i">@TestData</span> <span class="k">TABLE</span><span class="g">(</span><span class="i">ID</span> <span class="k">INT</span><span class="g">,</span><span class="i">Col1</span> <span class="k">VARCHAR</span><span class="g">(</span>20<span class="g">),</span><span class="i">Col2</span> <span class="k">VARCHAR</span><span class="g">(</span>20<span class="g">))</span>
<span class="k">INSERT</span> <span class="k">INTO</span> <span class="i">@TestData</span><span class="g">(</span><span class="i">ID</span><span class="g">,</span><span class="i">Col1</span><span class="g">,</span><span class="i">Col2</span><span class="g">)</span>
<span class="k">SELECT</span> 1<span class="g">,</span><span class="s">'New'</span><span class="g">,</span><span class="s">'Approved'</span> <span class="k">UNION</span> <span class="g">ALL</span>
<span class="k">SELECT</span> 2<span class="g">,</span><span class="s">'Approved'</span><span class="g">,</span><span class="s">'Commited'</span> <span class="k">UNION</span> <span class="g">ALL</span>
<span class="k">SELECT</span> 3<span class="g">,</span><span class="s">'Commited'</span><span class="g">,</span><span class="s">'In Progress'</span> <span class="k">UNION</span> <span class="g">ALL</span>
<span class="k">SELECT</span> 4<span class="g">,</span><span class="s">'New'</span><span class="g">,</span><span class="s">'Approved'</span> <span class="k">UNION</span> <span class="g">ALL</span>
<span class="k">SELECT</span> 5<span class="g">,</span><span class="s">'New'</span><span class="g">,</span><span class="s">'Approved'</span> <span class="k">UNION</span> <span class="g">ALL</span>
<span class="k">SELECT</span> 6<span class="g">,</span><span class="s">'New'</span><span class="g">,</span><span class="s">'Approved'</span> <span class="k">UNION</span> <span class="g">ALL</span>
<span class="k">SELECT</span> 7<span class="g">,</span><span class="s">'Approved'</span><span class="g">,</span><span class="s">'Removed'</span><span class="g">;</span>
<span class="k">WITH</span> <span class="i">P1</span> <span class="k">AS</span><span class="g">(</span>
    <span class="k">SELECT</span> <span class="i">ID</span><span class="g">,</span><span class="i">Col1</span><span class="g">,</span><span class="i">Col2</span><span class="g">,</span><span class="m">RANK</span><span class="g">()</span><span class="k">OVER</span><span class="g">(</span><span class="k">PARTITION</span> <span class="k">BY</span> <span class="i">Col1</span> <span class="g">+</span> <span class="i">Col2</span> <span class="k">ORDER</span> <span class="k">BY</span> <span class="i">ID</span><span class="g">)</span> <span class="i">R</span>
    <span class="k">FROM</span> <span class="i">@TestData</span>
<span class="g">)</span>
<span class="k">SELECT</span> <span class="i">ID</span><span class="g">,</span><span class="i">Col1</span><span class="g">,</span><span class="i">Col2</span><span class="g">,</span><span class="i">ID</span> <span class="g">-</span> <span class="i">R</span> <span class="k">AS</span> <span class="i">Gap</span><span class="g">,</span><span class="i">R</span> <span class="k">FROM</span> <span class="i">P1</span>
<span class="k">ORDER</span> <span class="k">BY</span> <span class="i">ID</span></div>
<div class="a" style="left:645px;top:133px;width:17px;height:319px;background:#f0f0f0;"></div>
<div class="a" style="left:645px;top:133px;width:17px;height:16px;background:#dfe3ea;border:1px solid #b8c0cc"></div>
<svg class="a" style="left:647px;top:134px;" width="13" height="15" viewBox="0 0 13 15"><g shape-rendering="crispEdges" fill="#101010"><rect x="6" y="1" width="1" height="1"/><rect x="5" y="2" width="3" height="1"/><rect x="4" y="3" width="5" height="1"/><rect x="6" y="4" width="1" height="2"/><rect x="1" y="6" width="11" height="1"/><rect x="1" y="8" width="11" height="1"/><rect x="6" y="9" width="1" height="2"/><rect x="4" y="11" width="5" height="1"/><rect x="5" y="12" width="3" height="1"/><rect x="6" y="13" width="1" height="1"/></g></svg>
<svg class="a" style="left:649px;top:155px;" width="9" height="6" viewBox="0 0 9 6"><path d="M0.5 5L4.5 1 8.5 5" fill="none" stroke="#a0a0a0" stroke-width="1.3"/></svg>
<div class="a" style="left:645px;top:168px;width:17px;height:156px;background:#cdcdcd;"></div>
<svg class="a" style="left:649px;top:441px;" width="9" height="6" viewBox="0 0 9 6"><path d="M0.5 1L4.5 5 8.5 1" fill="none" stroke="#a0a0a0" stroke-width="1.3"/></svg>
<div class="a" style="left:35px;top:452px;width:610px;height:17px;background:#f0f0f0;"></div>
<div class="a" style="left:645px;top:452px;width:17px;height:17px;background:#ffffff;"></div>
<div class="a" style="left:35px;top:453px;width:59px;height:14px;background:#ffffff;"></div>
<div class="t" style="left:38.00px;top:454.87px;font-size:11.5px;color:#0c0c0c;transform:scaleX(0.9814);">100 %</div>
<svg class="a" style="left:85px;top:459px;" width="6" height="3" viewBox="0 0 6 3"><path d="M0 0h6L3 3z" fill="#1a1a1a"/></svg>
<svg class="a" style="left:101px;top:456px;" width="6" height="9" viewBox="0 0 6 9"><path d="M5 0.5L1 4.5 5 8.5" fill="none" stroke="#a0a0a0" stroke-width="1.3"/></svg>
<div class="a" style="left:112px;top:453px;width:398px;height:16px;background:#cdcdcd;"></div>
<svg class="a" style="left:633px;top:456px;" width="6" height="9" viewBox="0 0 6 9"><path d="M1 0.5L5 4.5 1 8.5" fill="none" stroke="#a0a0a0" stroke-width="1.3"/></svg>
<div class="a" style="left:35px;top:469px;width:627px;height:314px;background:#f0f0f0;"></div>
<div class="a" style="left:35px;top:494px;width:625px;height:288px;background:#fff;border:1px solid #a0a0a0;border-left-color:#e8e8e8"></div>
<div class="a" style="left:35px;top:473px;width:73px;height:22px;background:#fff;border:1px solid #a8a8a8;border-left-color:#d8d8d8;border-bottom:none;border-radius:2px 2px 0 0"></div>
<svg class="a" style="left:44px;top:476px;" width="15" height="15" viewBox="0 0 15 15">
<g shape-rendering="crispEdges">
<rect x="0" y="1" width="14" height="13" fill="#222a3c"/>
<rect x="0" y="1" width="13" height="12" fill="#a8acb4"/>
<rect x="0" y="1" width="13" height="3" fill="#3a6ae0"/>
<rect x="1" y="2" width="6" height="1" fill="#9ac0f8"/>
<rect x="1" y="5" width="3" height="2" fill="#fff"/><rect x="5" y="5" width="3" height="2" fill="#fff"/><rect x="9" y="5" width="3" height="2" fill="#fff"/>
<rect x="1" y="8" width="3" height="2" fill="#fff"/><rect x="5" y="8" width="3" height="2" fill="#fff"/><rect x="9" y="8" width="3" height="2" fill="#d8f0ff"/>
<rect x="1" y="11" width="3" height="1" fill="#fff"/><rect x="5" y="11" width="3" height="1" fill="#eef8ff"/><rect x="9" y="11" width="3" height="1" fill="#b8e0ff"/>
</g>
</svg>
<div class="t" style="left:65.50px;top:478.41px;font-size:11.8px;color:#0c0c0c;transform:scaleX(0.8539);">Results</div>
<div class="a" style="left:107px;top:475px;width:79px;height:19px;background:linear-gradient(#f4f4f4,#e6e6e6);border:1px solid #a8a8a8;border-bottom:none"></div>
<svg class="a" style="left:112px;top:476px;" width="16" height="18" viewBox="0 0 16 18">
<g shape-rendering="crispEdges">
<rect x="1" y="1" width="8" height="15" fill="#8a90c8"/>
<rect x="2" y="2" width="6" height="13" fill="#f4f8fc"/>
<rect x="3" y="5" width="4" height="1" fill="#8a98b0"/><rect x="3" y="9" width="4" height="1" fill="#a0a8b8"/>
<rect x="6" y="12" width="2" height="2" fill="#40c040"/>
<rect x="8" y="6" width="6" height="11" fill="#1e2258"/>
<rect x="8" y="6" width="5" height="10" fill="#fafcff"/>
<rect x="12" y="6" width="1" height="2" fill="#1e2258"/>
<rect x="9" y="8" width="3" height="1" fill="#f04848"/><rect x="9" y="10" width="3" height="1" fill="#f86a30"/><rect x="9" y="12" width="3" height="1" fill="#f04848"/><rect x="9" y="14" width="3" height="1" fill="#f86a30"/>
<rect x="12" y="10" width="1" height="1" fill="#30a030"/><rect x="12" y="12" width="1" height="1" fill="#30a030"/><rect x="12" y="14" width="1" height="1" fill="#207020"/>
</g>
</svg>
<div class="t" style="left:134.40px;top:480.61px;font-size:11.8px;color:#0c0c0c;transform:scaleX(0.8702);">Messages</div>
<div class="a" style="left:39px;top:496px;width:619px;height:283px;background:#fff;border:1px solid #a2a6ae"></div>
<div class="a" style="left:40px;top:497px;width:244px;height:18px;background:#fbfcfd;"></div>
<div class="a" style="left:97px;top:515px;width:165px;height:19px;background:#bbd9fa;"></div>
<div class="a" style="left:97px;top:572px;width:165px;height:19px;background:#bbd9fa;"></div>
<div class="a" style="left:97px;top:591px;width:165px;height:19px;background:#bbd9fa;"></div>
<div class="a" style="left:97px;top:610px;width:165px;height:19px;background:#bbd9fa;"></div>
<div class="a" style="left:71px;top:497px;width:1px;height:18px;background:#e2eaf4;"></div>
<div class="a" style="left:71px;top:515px;width:1px;height:133px;background:#e6e6e6;"></div>
<div class="a" style="left:96px;top:497px;width:1px;height:18px;background:#e2eaf4;"></div>
<div class="a" style="left:96px;top:515px;width:1px;height:133px;background:#e6e6e6;"></div>
<div class="a" style="left:158px;top:497px;width:1px;height:18px;background:#e2eaf4;"></div>
<div class="a" style="left:158px;top:515px;width:1px;height:133px;background:#e6e6e6;"></div>
<div class="a" style="left:227px;top:497px;width:1px;height:18px;background:#e2eaf4;"></div>
<div class="a" style="left:227px;top:515px;width:1px;height:133px;background:#e6e6e6;"></div>
<div class="a" style="left:262px;top:497px;width:1px;height:18px;background:#e2eaf4;"></div>
<div class="a" style="left:262px;top:515px;width:1px;height:133px;background:#e6e6e6;"></div>
<div class="a" style="left:284px;top:497px;width:1px;height:18px;background:#e2eaf4;"></div>
<div class="a" style="left:284px;top:515px;width:1px;height:133px;background:#e6e6e6;"></div>
<div class="a" style="left:40px;top:515px;width:244px;height:1px;background:#dce7f3;"></div>
<div class="a" style="left:40px;top:534px;width:244px;height:1px;background:#e6e6e6;"></div>
<div class="a" style="left:40px;top:553px;width:244px;height:1px;background:#e6e6e6;"></div>
<div class="a" style="left:40px;top:572px;width:244px;height:1px;background:#e6e6e6;"></div>
<div class="a" style="left:40px;top:591px;width:244px;height:1px;background:#e6e6e6;"></div>
<div class="a" style="left:40px;top:610px;width:244px;height:1px;background:#e6e6e6;"></div>
<div class="a" style="left:40px;top:629px;width:244px;height:1px;background:#e6e6e6;"></div>
<div class="a" style="left:40px;top:648px;width:244px;height:1px;background:#e6e6e6;"></div>
<div class="a" style="left:96px;top:572px;width:63px;height:20px;border:1px dotted #1a1a1a"></div>
<div class="t" style="left:76.20px;top:499.82px;font-size:12.5px;color:#0c0c0c;transform:scaleX(0.8400);">ID</div>
<div class="t" style="left:101.20px;top:499.82px;font-size:12.5px;color:#0c0c0c;transform:scaleX(0.7897);">Col1</div>
<div class="t" style="left:162.80px;top:499.82px;font-size:12.5px;color:#0c0c0c;transform:scaleX(0.8442);">Col2</div>
<div class="t" style="left:232.40px;top:499.82px;font-size:12.5px;color:#0c0c0c;transform:scaleX(0.8296);">Gap</div>
<div class="t" style="left:267.00px;top:499.82px;font-size:12.5px;color:#0c0c0c;transform:scaleX(0.8863);">R</div>
<div class="t" style="left:46.00px;top:519.02px;font-size:12.5px;color:#0c0c0c;">1</div>
<div class="t" style="left:78.00px;top:519.02px;font-size:12.5px;color:#0c0c0c;">1</div>
<div class="t" style="left:104.00px;top:519.02px;font-size:12.5px;color:#0c0c0c;transform:scaleX(0.8198);">New</div>
<div class="t" style="left:166.00px;top:519.02px;font-size:12.5px;color:#0c0c0c;transform:scaleX(0.8503);">Approved</div>
<div class="t" style="left:234.50px;top:519.02px;font-size:12.5px;color:#0c0c0c;">0</div>
<div class="t" style="left:268.00px;top:519.02px;font-size:12.5px;color:#0c0c0c;">1</div>
<div class="t" style="left:46.00px;top:538.02px;font-size:12.5px;color:#0c0c0c;">2</div>
<div class="t" style="left:78.00px;top:538.02px;font-size:12.5px;color:#0c0c0c;">2</div>
<div class="t" style="left:103.50px;top:538.02px;font-size:12.5px;color:#0c0c0c;transform:scaleX(0.8503);">Approved</div>
<div class="t" style="left:166.00px;top:538.02px;font-size:12.5px;color:#0c0c0c;transform:scaleX(0.7989);">Commited</div>
<div class="t" style="left:234.50px;top:538.02px;font-size:12.5px;color:#0c0c0c;">1</div>
<div class="t" style="left:268.00px;top:538.02px;font-size:12.5px;color:#0c0c0c;">1</div>
<div class="t" style="left:46.00px;top:557.02px;font-size:12.5px;color:#0c0c0c;">3</div>
<div class="t" style="left:78.00px;top:557.02px;font-size:12.5px;color:#0c0c0c;">3</div>
<div class="t" style="left:103.50px;top:557.02px;font-size:12.5px;color:#0c0c0c;transform:scaleX(0.7989);">Commited</div>
<div class="t" style="left:166.00px;top:557.02px;font-size:12.5px;color:#0c0c0c;transform:scaleX(0.8292);">In Progress</div>
<div class="t" style="left:234.50px;top:557.02px;font-size:12.5px;color:#0c0c0c;">2</div>
<div class="t" style="left:268.00px;top:557.02px;font-size:12.5px;color:#0c0c0c;">1</div>
<div class="t" style="left:46.00px;top:576.02px;font-size:12.5px;color:#0c0c0c;">4</div>
<div class="t" style="left:78.00px;top:576.02px;font-size:12.5px;color:#0c0c0c;">4</div>
<div class="t" style="left:104.00px;top:576.02px;font-size:12.5px;color:#0c0c0c;transform:scaleX(0.8198);">New</div>
<div class="t" style="left:166.00px;top:576.02px;font-size:12.5px;color:#0c0c0c;transform:scaleX(0.8503);">Approved</div>
<div class="t" style="left:234.50px;top:576.02px;font-size:12.5px;color:#0c0c0c;">2</div>
<div class="t" style="left:268.00px;top:576.02px;font-size:12.5px;color:#0c0c0c;">2</div>
<div class="t" style="left:46.00px;top:595.02px;font-size:12.5px;color:#0c0c0c;">5</div>
<div class="t" style="left:78.00px;top:595.02px;font-size:12.5px;color:#0c0c0c;">5</div>
<div class="t" style="left:104.00px;top:595.02px;font-size:12.5px;color:#0c0c0c;transform:scaleX(0.8198);">New</div>
<div class="t" style="left:166.00px;top:595.02px;font-size:12.5px;color:#0c0c0c;transform:scaleX(0.8503);">Approved</div>
<div class="t" style="left:234.50px;top:595.02px;font-size:12.5px;color:#0c0c0c;">2</div>
<div class="t" style="left:268.00px;top:595.02px;font-size:12.5px;color:#0c0c0c;">3</div>
<div class="t" style="left:46.00px;top:614.02px;font-size:12.5px;color:#0c0c0c;">6</div>
<div class="t" style="left:78.00px;top:614.02px;font-size:12.5px;color:#0c0c0c;">6</div>
<div class="t" style="left:104.00px;top:614.02px;font-size:12.5px;color:#0c0c0c;transform:scaleX(0.8198);">New</div>
<div class="t" style="left:166.00px;top:614.02px;font-size:12.5px;color:#0c0c0c;transform:scaleX(0.8503);">Approved</div>
<div class="t" style="left:234.50px;top:614.02px;font-size:12.5px;color:#0c0c0c;">2</div>
<div class="t" style="left:268.00px;top:614.02px;font-size:12.5px;color:#0c0c0c;">4</div>
<div class="t" style="left:46.00px;top:633.02px;font-size:12.5px;color:#0c0c0c;">7</div>
<div class="t" style="left:78.00px;top:633.02px;font-size:12.5px;color:#0c0c0c;">7</div>
<div class="t" style="left:103.50px;top:633.02px;font-size:12.5px;color:#0c0c0c;transform:scaleX(0.8503);">Approved</div>
<div class="t" style="left:166.00px;top:633.02px;font-size:12.5px;color:#0c0c0c;transform:scaleX(0.8132);">Removed</div>
<div class="t" style="left:234.50px;top:633.02px;font-size:12.5px;color:#0c0c0c;">6</div>
<div class="t" style="left:268.00px;top:633.02px;font-size:12.5px;color:#0c0c0c;">1</div>
<div class="a" style="left:35px;top:784px;width:627px;height:26px;background:linear-gradient(#f0e68c 0,#f0e68c 83%,#fbe4a0 83%);border-radius:0 0 2px 2px"></div>
<svg class="a" style="left:38px;top:787px;" width="16" height="16" viewBox="0 0 16 16"><defs><radialGradient id="chk" cx="0.4" cy="0.3" r="0.8"><stop offset="0" stop-color="#7ad07a"/><stop offset="0.6" stop-color="#3a9a3a"/><stop offset="1" stop-color="#1e6e1e"/></radialGradient></defs><circle cx="8" cy="8" r="7.6" fill="url(#chk)" stroke="#2a7a2a" stroke-width="0.6"/><path d="M4 8.3l2.8 2.8L12.2 5.6" fill="none" stroke="#fff" stroke-width="1.9"/></svg>
<div class="t" style="left:58.80px;top:789.02px;font-size:12.5px;color:#0c0c0c;transform:scaleX(0.9019);">Query</div>
<div class="t" style="left:95.20px;top:789.02px;font-size:12.5px;color:#0c0c0c;transform:scaleX(0.9122);">execut...</div>
<div class="a" style="left:151px;top:788px;width:1px;height:14px;background:#c9c3a4;"></div>
<div class="a" style="left:152px;top:788px;width:1px;height:14px;background:#fffdf0;"></div>
<div class="a" style="left:328px;top:788px;width:1px;height:14px;background:#c9c3a4;"></div>
<div class="a" style="left:329px;top:788px;width:1px;height:14px;background:#fffdf0;"></div>
<div class="a" style="left:490px;top:788px;width:1px;height:14px;background:#c9c3a4;"></div>
<div class="a" style="left:491px;top:788px;width:1px;height:14px;background:#fffdf0;"></div>
<div class="a" style="left:549px;top:788px;width:1px;height:14px;background:#c9c3a4;"></div>
<div class="a" style="left:550px;top:788px;width:1px;height:14px;background:#fffdf0;"></div>
<div class="a" style="left:604px;top:788px;width:1px;height:14px;background:#c9c3a4;"></div>
<div class="a" style="left:605px;top:788px;width:1px;height:14px;background:#fffdf0;"></div>
<div class="t" style="left:157.00px;top:789.02px;font-size:12.5px;color:#0c0c0c;transform:scaleX(0.9462);">tcp:wvlhdcayb9.database.win...</div>
<div class="t" style="left:334.80px;top:789.02px;font-size:12.5px;color:#0c0c0c;transform:scaleX(0.9042);">SuperEra@wvlhdcayb9 (146)</div>
<div class="t" style="left:496.00px;top:789.02px;font-size:12.5px;color:#0c0c0c;transform:scaleX(0.8616);">SuperEra</div>
<div class="t" style="left:555.00px;top:789.02px;font-size:12.5px;color:#0c0c0c;transform:scaleX(0.8632);">00:00:00</div>
<div class="t" style="left:610.30px;top:789.02px;font-size:12.5px;color:#0c0c0c;transform:scaleX(0.9154);">7 rows</div>
<div class="t" style="left:12.60px;top:822.04px;font-size:12px;color:#ffffff;transform:scaleX(0.9110);">Ready</div>
<div class="t" style="left:318.00px;top:822.04px;font-size:12px;color:#ffffff;transform:scaleX(0.9420);">Ln 4</div>
<div class="t" style="left:502.00px;top:822.04px;font-size:12px;color:#ffffff;transform:scaleX(0.9639);">Col 2</div>
<svg class="a" style="left:629px;top:817px;" width="66" height="23" viewBox="0 0 66 23">
<g fill="none" stroke-linejoin="miter">
<rect x="44" y="4" width="6.5" height="13" fill="#f4efe6"/><rect x="55" y="14.5" width="6" height="5.5" fill="#f4efe6"/>
<path d="M10 1L1.5 9M10 1L18.5 9M5 10.5H15M5 15H15M2 19.5H18M10 10.5V19.5M21.5 4.5H29.5M25.5 4.5V16.5M21 18L30 16M34 1L32.5 6.5M32.5 6.5H41M33.5 9L41 20M40 9L31.5 20M43.5 3.5H51V17.5H43.5ZM43.5 10.5H51M47.2 3.5V17.5M56 1L53 6.5M55 4.5H62L54.5 12M56.5 7.5L62.5 11.5M54.5 14H61.5V20.5H54.5Z" stroke="#f6f1e8" stroke-width="4.8" stroke-linecap="square"/>
<path d="M10 1L1.5 9M10 1L18.5 9M5 10.5H15M5 15H15M2 19.5H18M10 10.5V19.5M21.5 4.5H29.5M25.5 4.5V16.5M21 18L30 16M34 1L32.5 6.5M32.5 6.5H41M33.5 9L41 20M40 9L31.5 20M43.5 3.5H51V17.5H43.5ZM43.5 10.5H51M47.2 3.5V17.5M56 1L53 6.5M55 4.5H62L54.5 12M56.5 7.5L62.5 11.5M54.5 14H61.5V20.5H54.5Z" stroke="#ae9576" stroke-width="3" stroke-linecap="butt"/>
</g>
</svg>
</body></html>
